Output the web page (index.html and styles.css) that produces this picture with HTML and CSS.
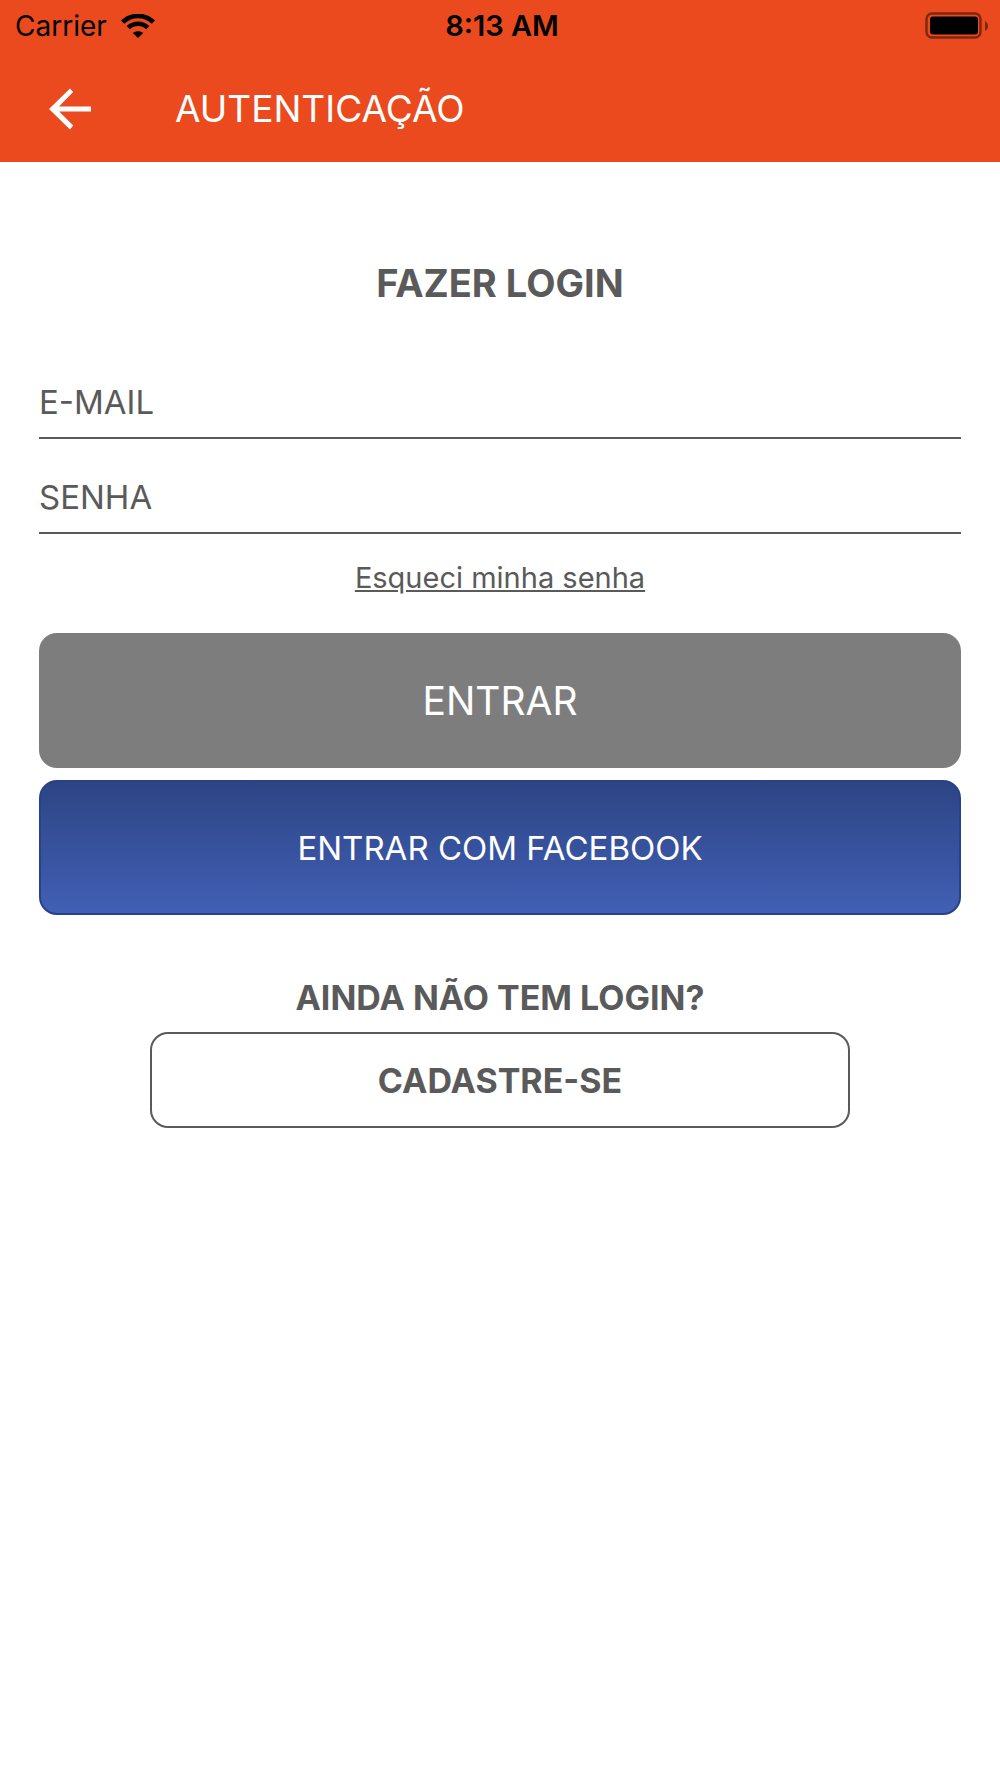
FILE: index.html
```html
<!DOCTYPE html>
<html lang="pt-BR">
<head>
<meta charset="utf-8">
<meta name="viewport" content="width=device-width, initial-scale=1">
<title>Autenticação</title>
<link rel="stylesheet" href="styles.css">
</head>
<body>
<header class="header">
  <div class="status">
    <div class="status-left">
      <span>Carrier</span>
      <svg class="wifi" viewBox="0 0 34 24" aria-hidden="true">
        <g fill="none" stroke="#000" stroke-width="4.6">
          <path d="M1.600 8.200C10-.2 24-.2 32.400 8.200"/>
          <path d="M7.300 13.700C12.700 8.500 21.300 8.500 26.700 13.700"/>
        </g>
        <path d="M17 24l-5.200-5c2.900-2.500 7.500-2.500 10.400 0z"/>
      </svg>
    </div>
    <span class="time">8:13 AM</span>
    <svg class="battery" viewBox="0 0 64 28" aria-hidden="true">
      <rect x="1.500" y="1.500" width="54" height="24" rx="5.500" fill="none" stroke="#7d2810" stroke-width="2.400"/>
      <rect x="5" y="4.500" width="48" height="18" rx="3" fill="#000"/>
      <path d="M60 9c4 2 4 8 0 10z" fill="#7d2810"/>
    </svg>
  </div>
  <div class="toolbar">
    <button class="back" type="button" aria-label="Voltar">
      <svg class="back-icon" viewBox="0 0 42 42" aria-hidden="true">
        <path d="M42 18.400v5.200H10.200l14 14L21 41.600 0 21 21 .4l3.200 3.700-14.200 14.300z" fill="#fff"/>
      </svg>
    </button>
    <h1 class="title">AUTENTICAÇÃO</h1>
  </div>
</header>
<main class="content">
  <h2 class="heading">FAZER LOGIN</h2>
  <form class="form">
    <input class="field" type="email" placeholder="E-MAIL" aria-label="E-mail">
    <input class="field" type="password" placeholder="SENHA" aria-label="Senha">
    <a class="forgot" href="#">Esqueci minha senha</a>
    <div class="actions">
      <button class="button button-login" type="submit">ENTRAR</button>
      <button class="button button-facebook" type="button">ENTRAR COM FACEBOOK</button>
    </div>
  </form>
  <section class="signup">
    <p class="signup-text">AINDA NÃO TEM LOGIN?</p>
    <button class="button-signup" type="button">CADASTRE-SE</button>
  </section>
</main>
</body>
</html>
```

FILE: styles.css
```css
* {
  box-sizing: border-box;
}

body {
  margin: 0;
  background: #fff;
  color: #5a5a5a;
  font-family: Inter, "Liberation Sans", sans-serif;
  font-size: 33px;
}

button,
input {
  font: inherit;
  color: inherit;
}

.header {
  background: #ea4a1e;
}

.status {
  display: grid;
  grid-template-columns: 1fr auto 1fr;
  align-items: center;
  height: 51px;
  padding: 0 11px 0 15px;
  color: #000;
  font-size: 28px;
}

.status-left {
  display: flex;
  align-items: center;
  gap: 14px;
}

.wifi {
  width: 34px;
  height: 24px;
}

.time {
  font-size: 29px;
  font-weight: 600;
}

.battery {
  justify-self: end;
  width: 64px;
  height: 28px;
}

.toolbar {
  display: flex;
  align-items: center;
  gap: 84px;
  height: 111px;
  padding: 4px 49px 0;
}

.back {
  display: flex;
  padding: 0;
  border: 0;
  background: none;
}

.back-icon {
  width: 42px;
  height: 42px;
}

.title {
  margin: 0;
  color: #fff;
  font-size: 37px;
  font-weight: 400;
}

.content {
  display: flex;
  flex-direction: column;
  padding: 97px 39px 0;
}

.heading {
  margin: 0 0 63px;
  font-size: 38px;
  font-weight: 700;
  line-height: 48px;
  text-align: center;
}

.form {
  display: flex;
  flex-direction: column;
}

.field {
  width: 100%;
  height: 69px;
  margin-bottom: 26px;
  padding: 0 0 4px;
  border: 0;
  border-bottom: 2px solid #5a5a5a;
  border-radius: 0;
  background: none;
  outline: 0;
}

.field::placeholder {
  color: #5a5a5a;
  opacity: 1;
}

.forgot {
  align-self: center;
  color: inherit;
  font-size: 29px;
  line-height: 36px;
}

.actions {
  display: flex;
  flex-direction: column;
  gap: 12px;
  margin-top: 37px;
}

.button {
  height: 135px;
  border: 0;
  border-radius: 18px;
  color: #fff;
}

.button-login {
  background: #7d7d7d;
  font-size: 39px;
}

.button-facebook {
  border: 2px solid #27418a;
  background: linear-gradient(#2d4585, #415fb4);
}

.signup {
  display: flex;
  flex-direction: column;
  gap: 13px;
  margin: 62px 111px 0;
  font-size: 34px;
  font-weight: 700;
  text-align: center;
}

.signup-text {
  margin: 0;
  line-height: 42px;
}

.button-signup {
  height: 96px;
  border: 2px solid #5a5a5a;
  border-radius: 18px;
  background: #fff;
}
```
